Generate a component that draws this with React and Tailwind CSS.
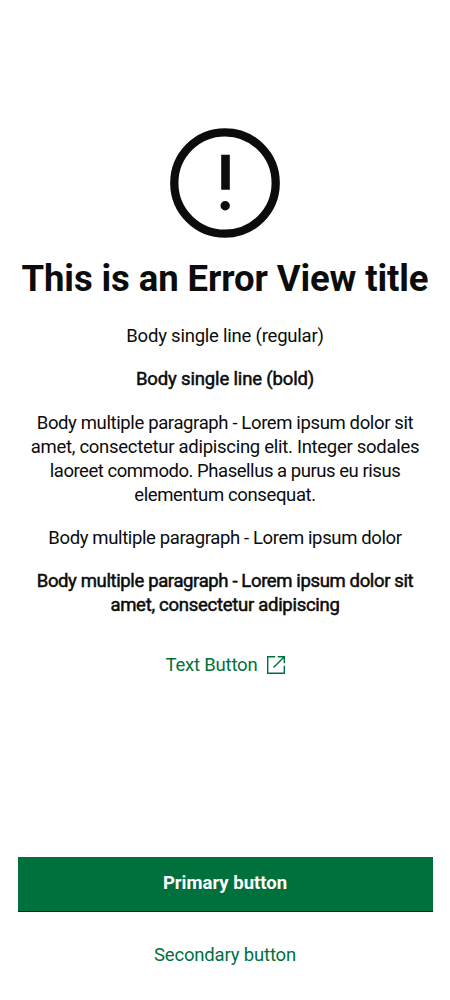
function Line({ className = "", children }) {
  return <span className={`block whitespace-nowrap ${className}`}>{children}</span>;
}

const bold = "[-webkit-text-stroke:0.5px_currentColor]";

export default function App() {
  return (
    <main className="flex h-[1000px] w-[450px] flex-col items-center bg-white pt-[128px] text-center font-[Roboto,sans-serif] text-[18.5px] leading-[24px] tracking-[-0.37px] text-[#0b0c0c]">
      <svg className="size-[110px] shrink-0" viewBox="0 0 110 110" fill="none">
        <circle cx="55" cy="55" r="50.7" stroke="#0b0c0c" strokeWidth="8.3" />
        <path d="M51.2 26.8h8.6v35h-8.6z" fill="#0b0c0c" />
        <circle cx="55.2" cy="77.8" r="4.7" fill="#0b0c0c" />
      </svg>
      <h1 className="mt-[21px] whitespace-nowrap text-[36.5px] leading-[40px] font-bold tracking-[-0.1px]">This is an Error View title</h1>
      <div className="mt-[24.5px] flex flex-col gap-[19.4px]">
        <p><Line className="tracking-[-0.22px]">Body single line (regular)</Line></p>
        <p className={bold}><Line className="tracking-[-0.15px]">Body single line (bold)</Line></p>
        <p className="pt-px -mb-px">
          <Line>Body multiple paragraph - Lorem ipsum dolor sit</Line>
          <Line className="tracking-[-0.28px]">amet, consectetur adipiscing elit. Integer sodales</Line>
          <Line className="tracking-[-0.46px]">laoreet commodo. Phasellus a purus eu risus</Line>
          <Line>elementum consequat.</Line>
        </p>
        <p><Line>Body multiple paragraph - Lorem ipsum dolor</Line></p>
        <p className={bold}>
          <Line>Body multiple paragraph - Lorem ipsum dolor sit</Line>
          <Line className="tracking-[-0.28px]">amet, consectetur adipiscing</Line>
        </p>
      </div>
      <button className="mt-[36px] flex items-center gap-[9px] text-[#00703c]">
        <Line className="tracking-[-0.2px]">Text Button</Line>
        <svg className="size-[18px]" viewBox="0 0 18 18" fill="none" stroke="currentColor" strokeWidth="1.4">
          <path d="M8.2.7H.7v16.6h16.6V9.8M10.7.7h6.6v6.6M17.3.7 6.5 11.5" />
        </svg>
      </button>
      <div className="mt-auto flex w-[415px] flex-col items-center pb-[33px]">
        <button className="h-[55px] w-full border-b border-[#002d18] bg-[#00703c] pb-[3px] font-bold tracking-normal text-white">Primary button</button>
        <button className="mt-[31px] text-[#00703c]"><Line className="tracking-[-0.17px]">Secondary button</Line></button>
      </div>
    </main>
  );
}
